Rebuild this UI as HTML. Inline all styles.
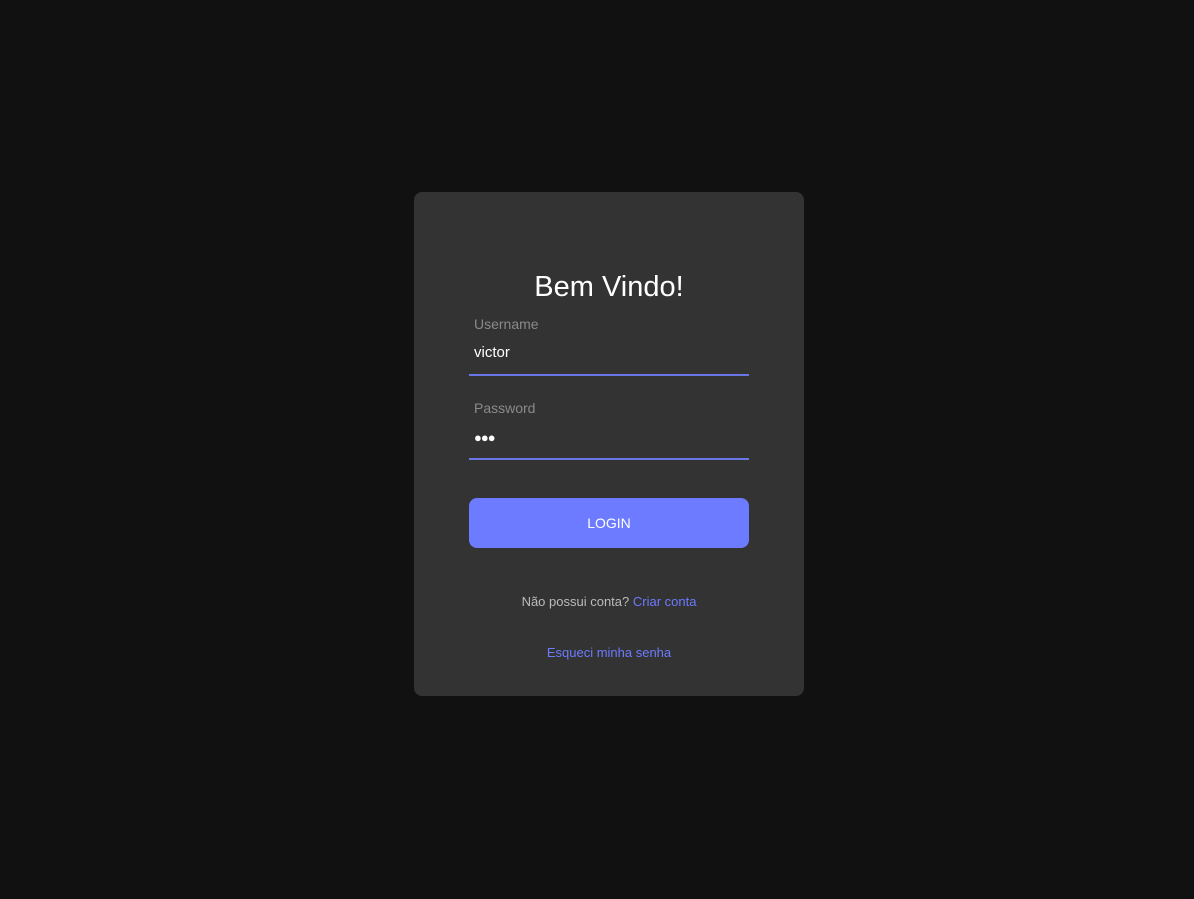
<!DOCTYPE html>
<html><head><style>
*{margin:0;padding:0;box-sizing:border-box}
body{width:1194px;height:899px;background:#111;font-family:"Liberation Sans",sans-serif;position:relative;overflow:hidden}
.card{position:absolute;left:414px;top:192px;width:390px;height:504px;background:#333;border-radius:8px}
.t{position:absolute;top:79px;left:0;width:390px;text-align:center;color:#fff;font-size:29px}
.l{position:absolute;left:60px;color:#8a8a8a;font-size:14px}
.v{position:absolute;left:60px;color:#fff;font-size:15px}
.u{position:absolute;left:55px;width:280px;height:2px;background:#6b76e6}
.b{position:absolute;left:55px;top:306px;width:280px;height:50px;background:#6c7bff;border-radius:8px;color:#fff;font-size:14px;text-align:center;line-height:50px}
.s{position:absolute;left:0;width:390px;text-align:center;font-size:13px;color:#bbb}
a{color:#6c7bff;text-decoration:none}
</style></head><body>
<div class="card">
<div class="t">Bem Vindo!</div>
<div class="l" style="top:124px">Username</div>
<div class="v" style="top:152px">victor</div>
<div class="u" style="top:182px"></div>
<div class="l" style="top:208px">Password</div>
<div class="v" style="top:238px;font-size:13px;letter-spacing:-1px">●●●</div>
<div class="u" style="top:266px"></div>
<div class="b">LOGIN</div>
<div class="s" style="top:402px">Não possui conta? <a>Criar conta</a></div>
<div class="s" style="top:453px"><a>Esqueci minha senha</a></div>
</div>
</body></html>
